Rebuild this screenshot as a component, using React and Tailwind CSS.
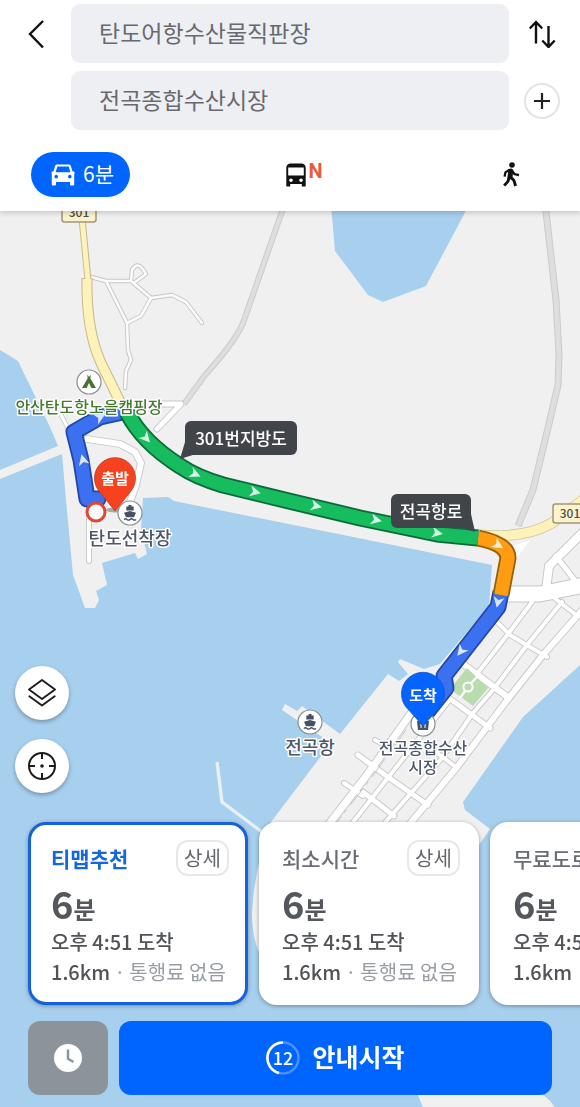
import React from "react";

const LAND = "#f0f0f0";
const WATER = "#a7cfee";

const localRoads = [
  "M91 277 L106 281 L131 281 L151 298 L172 295 L186 302 L202 323",
  "M131 281 L132 270 Q137 262 142 268 L146 274 L134 283",
  "M106 281 L127 323 L128 350 L131 360 L126 371 L125 388",
  "M127 323 L141 316 L151 298",
];

const streets = [
  { d: "M87 439 L120 444 L135 452 L141 463 L136 485 L130 502", w: 6 },
  { d: "M89 518 L89 561", w: 4 },
  { d: "M160 404 L181 404 L157 429", w: 5 },
  { d: "M60 413 L70 432", w: 3 },
  { d: "M506 594 L540 594 L584 585", w: 15 },
  { d: "M546 590 L549 566 L584 531", w: 8 },
  { d: "M556 556 L576 582", w: 5 },
  { d: "M532 602 L508 634 L466 688", w: 4 },
  { d: "M562 602 L527 645 L493 690 L473 713 L442 758 L382 826", w: 4 },
  { d: "M584 608 L543 655 L508 699 L457 767 L408 826", w: 6 },
  { d: "M412 712 L367 775 L326 828", w: 7 },
  { d: "M448 702 L398 765 L350 826", w: 4 },
  { d: "M494 619 L510 635 L547 657", w: 4 },
  { d: "M553 597 L575 614", w: 4 },
  { d: "M463 664 L509 698", w: 6 },
  { d: "M446 696 L490 728", w: 5 },
  { d: "M375 740 L390 748", w: 4 },
  { d: "M428 746 L457 768", w: 4 },
  { d: "M358 755 L385 775 L428 805", w: 5 },
  { d: "M344 783 L363 796", w: 4 },
  { d: "M363 792 L394 816", w: 5 },
];

const route = [
  { d: "M501 592 L498 607 L444 676 L446 688 L427 712", line: "#3b70f0", edge: "#2148a4", cap: "butt" },
  { d: "M98 499 L87 499 L81 460 L74 432 L100 417 L127 411", line: "#3b70f0", edge: "#2148a4", cap: "round" },
  { d: "M478 538 Q508 544 508 558 L501 595", line: "#ff9c12", edge: "#96600f", cap: "butt" },
  {
    d: "M127 412 Q142 442 180 466 Q196 477 223 485 L293 502 L360 518 L437 534 L478 538",
    line: "#17bc5f",
    edge: "#0d6a3a",
    cap: "butt",
  },
];

const arrows = [
  [100, 417, -28],
  [83, 460, -105],
  [146, 438, 48],
  [195, 474, 24],
  [255, 492, 13],
  [316, 506, 13],
  [376, 520, 13],
  [437, 533, 10],
  [498, 545, 32],
  [498, 602, 102],
  [461, 651, 128],
];

function Road({ d, w, fill, edge }) {
  return (
    <>
      <path d={d} stroke={edge} strokeWidth={w + 2} />
      <path d={d} stroke={fill} strokeWidth={w} />
    </>
  );
}

function PoiLabel({ x, y, size = 17, color = "#4d5768", children }) {
  return (
    <text
      x={x}
      y={y}
      textAnchor="middle"
      fontSize={size}
      fontWeight="500"
      fill={color}
      stroke="#fff"
      strokeWidth="3"
      strokeLinejoin="round"
      paintOrder="stroke"
    >
      {children}
    </text>
  );
}

function PoiDot({ x, y, children }) {
  return (
    <g transform={`translate(${x} ${y})`}>
      <circle r="12" fill="#fff" stroke="#8b8f94" strokeWidth="1.2" />
      {children}
    </g>
  );
}

function Ship() {
  return (
    <g fill="#465163">
      <path d="M-1.5 -8h3v1.6h2.2v4h-7.4v-4h2.2z" />
      <path d="M-6 -0.2 L0 -2 L6 -0.2 L4 4.2 H-4z" />
      <path d="M-6 6.4 q1.5 -1.4 3 0 t3 0 t3 0 t3 0" fill="none" stroke="#465163" strokeWidth="1.3" />
    </g>
  );
}

function Callout({ x, y, w, tail, label }) {
  return (
    <g>
      <path d={tail} fill="#41454a" />
      <rect x={x} y={y} width={w} height="34" rx="6" fill="#41454a" />
      <text x={x + w / 2} y={y + 24} textAnchor="middle" fontSize="17" fontWeight="500" fill="#fff">
        {label}
      </text>
    </g>
  );
}

function Shield({ x, y }) {
  return (
    <g>
      <rect x={x} y={y} width="34" height="19" rx="2.5" fill="#fdf2cb" stroke="#a2957a" strokeWidth="1.5" />
      <text x={x + 17} y={y + 14} textAnchor="middle" fontSize="12" fontWeight="500" fill="#4b4b4b">
        301
      </text>
    </g>
  );
}

function RouteMap() {
  return (
    <svg
      className="absolute inset-0 h-full w-full"
      viewBox="0 211 580 896"
      preserveAspectRatio="xMidYMin slice"
      role="img"
      aria-label="경로 지도"
    >
      <rect x="0" y="200" width="580" height="920" fill={WATER} />
      <g fill={LAND}>
        <path d="M0 200 H580 V665 L523 717 L463 802 L465 810 L490 829 L479 845 L440 920 L400 990 H290 L258 950 Q252 935 252 912 Q254 880 262 850 L271 822 L331 743 L282 710 L285 704 L297 711 L302 706 L340 734 L388 674 L399 681 L408 674 L398 662 L400 659 L424 669 L440 664 L489 606 L492 565 L174 501 L168 497 L143 498 L141 530 L147 554 L138 559 L135 553 L102 563 L107 585 L96 591 L99 600 L95 608 H85 L73 575 L66 500 L62 454 L0 479 V470 L58 446 L50 427 L18 361 L0 350z" />
        <path d="M415 1088 H530 Q550 1096 556 1110 H424z" />
      </g>
      <path d="M331 205 L335 251 L368 295 L383 302 L426 286 L469 205z" fill={WATER} />
      <path d="M217 762 L222 802 L262 832" fill="none" stroke="#e9eff4" strokeWidth="3.4" />

      <g fill="none" strokeLinejoin="round">
        <Road d="M285 203 L243 323 Q235 342 205 375 L184 404" w={4} fill="#dedede" edge="#cbcbcb" />
        <Road d="M545 203 L556 300 L559 355 L558 385 L548 428 L533 490 L518 526" w={5} fill="#dedede" edge="#cbcbcb" />
        <g strokeLinecap="round">
          {localRoads.map((d) => (
            <path key={d} d={d} stroke="#c6c6c6" strokeWidth="4.4" />
          ))}
          {localRoads.map((d) => (
            <path key={d} d={d} stroke="#fbfbfb" strokeWidth="2.6" />
          ))}
          {streets.map((s) => (
            <path key={s.d} d={s.d} stroke="#c6c6c6" strokeWidth={s.w + 1.8} />
          ))}
          {streets.map((s) => (
            <path key={s.d} d={s.d} stroke="#fff" strokeWidth={s.w} />
          ))}
        </g>
        <path d="M406 730 L372 777 L328 834" stroke="#c6c6c6" strokeWidth="1" strokeDasharray="22 6 4 4" />
        <path d="M507 548 L530 540 L515 560z" fill="#fff" />
        <path d="M82 218 L88 280" stroke="#c6b98c" strokeWidth="7" />
        <path d="M87 278 Q86 330 101 363 L126 414" stroke="#c6b98c" strokeWidth="11" />
        <path d="M478 535 Q525 539 552 523 L584 499" stroke="#d3c79c" strokeWidth="11" />
        <path d="M82 218 L88 281" stroke="#fdf2b9" strokeWidth="5" />
        <path d="M87 279 Q86 330 101 363 L126 414" stroke="#fdf2b9" strokeWidth="9" />
        <path d="M478 535 Q525 539 552 523 L584 499" stroke="#fdf2b9" strokeWidth="9.4" />
      </g>

      <path d="M467 668 L488 688 L473 706 L450 689z" fill="#b8dcae" />
      <g fill="none" stroke="#fff">
        <path d="M478 676 L471 683 M465 691 L460 698" strokeWidth="2.4" />
        <circle cx="468" cy="687" r="4.6" strokeWidth="2" fill="#b8dcae" />
      </g>

      <Shield x={62} y={203} />
      <Shield x={553} y={504} />

      <g fill="none" strokeLinejoin="round">
        {route.map((r) => (
          <g key={r.d} strokeLinecap={r.cap}>
            <path d={r.d} stroke={r.edge} strokeWidth="17" />
            <path d={r.d} stroke={r.line} strokeWidth="13.4" />
          </g>
        ))}
      </g>
      <g fill="#fff" opacity="0.82">
        {arrows.map(([x, y, a]) => (
          <path key={`${x}-${y}`} d="M6 0 L-5 -5.5 L-2 0 L-5 5.5z" transform={`translate(${x} ${y}) rotate(${a})`} />
        ))}
      </g>

      <PoiDot x={89} y={382}>
        <path d="M-1.6 -7.4 L0 -5 L1.6 -7.4 L1.4 -3.6 L7 6 H2.4 L0 1 L-2.4 6 H-7 L-1.4 -3.6z" fill="#457330" />
      </PoiDot>
      <PoiLabel x={89} y={413} size={16} color="#457a2f">
        안산탄도항노을캠핑장
      </PoiLabel>

      <ellipse cx="115" cy="510" rx="9" ry="2.5" fill="#000" opacity="0.3" />
      <PoiDot x={130} y={513}>
        <Ship />
      </PoiDot>
      <PoiLabel x={130} y={545} size={18}>
        탄도선착장
      </PoiLabel>
      <PoiDot x={310} y={722}>
        <Ship />
      </PoiDot>
      <PoiLabel x={310} y={754} size={18}>
        전곡항
      </PoiLabel>
      <PoiDot x={423} y={724}>
        <path d="M-6 -3 H6 L5 6 H-5z" fill="#465163" />
        <path d="M-2 0v4 M2 0v4" stroke="#fff" />
      </PoiDot>
      <PoiLabel x={423} y={754} size={16}>
        <tspan x="423">전곡종합수산</tspan>
        <tspan x="423" dy="19">
          시장
        </tspan>
      </PoiLabel>

      <circle cx="96" cy="512" r="9" fill="#fff" stroke="#e0492f" strokeWidth="3" />
      <path d="M115 511 L99 491 A20.5 20.5 0 1 1 131 491z" fill="#f7421f" stroke="#b83a22" strokeWidth="0.8" />
      <text x="115" y="484" textAnchor="middle" fontSize="15" fontWeight="700" fill="#fff">
        출발
      </text>
      <path d="M423 726 L406 707 A21.5 21.5 0 1 1 440 707z" fill="#0564ff" stroke="#1b55c0" strokeWidth="0.8" />
      <text x="423" y="701" textAnchor="middle" fontSize="15" fontWeight="700" fill="#fff">
        도착
      </text>

      <Callout x={185} y={421} w={112} tail="M185 442 L180 459 L196 454z" label="301번지방도" />
      <Callout x={391} y={494} w={80} tail="M471 514 L475 532 L460 527z" label="전곡항로" />
    </svg>
  );
}

function CarIcon() {
  return (
    <svg className="h-[22px] w-6" viewBox="0 0 24 22" fill="currentColor" aria-hidden="true">
      <path
        fillRule="evenodd"
        d="M6 0.5 H18 Q19.3 0.5 19.8 1.8 L21.6 7.6 H23 Q23.8 7.8 23.5 9 L23.2 10.5 V20.5 Q23.2 21.5 22.2 21.5 H20 Q19 21.5 19 20.5 V18 H5 V20.5 Q5 21.5 4 21.5 H1.8 Q0.8 21.5 0.8 20.5 V10.5 L0.5 9 Q0.2 7.8 1 7.6 H2.4 L4.2 1.8 Q4.7 0.5 6 0.5z M6.4 2.6 L4.6 8.2 H19.4 L17.6 2.6z M5.2 10.8 a1.8 1.8 0 1 0 0.01 0z M18.8 10.8 a1.8 1.8 0 1 0 0.01 0z"
      />
    </svg>
  );
}

function BusIcon() {
  return (
    <svg className="h-6 w-5" viewBox="0 0 20 24" fill="currentColor" aria-hidden="true">
      <path
        fillRule="evenodd"
        d="M4 0.5 H16 Q19.7 1.2 19.7 5 V23 Q19.7 23.6 19 23.6 H16.4 Q15.8 23.6 15.8 23 V21 H4.2 V23 Q4.2 23.6 3.6 23.6 H1 Q0.3 23.6 0.3 23 V5 Q0.3 1.2 4 0.5z M2.2 4.4 V12.6 H17.8 V4.4z M5 15.4 a1.8 1.8 0 1 0 0.01 0z M15 15.4 a1.8 1.8 0 1 0 0.01 0z"
      />
    </svg>
  );
}

function WalkIcon() {
  return (
    <svg className="h-[25px] w-[18px]" viewBox="0 0 18 25" fill="none" stroke="currentColor" strokeLinejoin="round" aria-hidden="true">
      <circle cx="10" cy="3" r="2.8" fill="currentColor" stroke="none" />
      <path d="M8.8 9 L8 15" strokeWidth="5" strokeLinecap="round" />
      <path d="M7.5 7.8 L3.4 10.4 L2.6 14.6" strokeWidth="2.3" />
      <path d="M10 8.8 L12.6 12.2 L17 13.2" strokeWidth="2.3" />
      <path d="M8.6 15 L12 18.6 L13.6 24" strokeWidth="2.9" />
      <path d="M6.9 15.5 L6 19.4 L2.2 23.6" strokeWidth="2.9" />
    </svg>
  );
}

function PlaceField({ id, label, value }) {
  return (
    <div className="flex">
      <label htmlFor={id} className="sr-only">
        {label}
      </label>
      <input
        id={id}
        type="text"
        defaultValue={value}
        className="h-[59px] w-full min-w-0 rounded-[9px] bg-[#eeeff3] px-7 pb-[3px] text-[23px] font-normal text-[#66696f] outline-none"
      />
    </div>
  );
}

function RouteCard({ name, active }) {
  return (
    <li
      className={
        active
          ? "w-[220px] shrink-0 rounded-[18px] border-3 border-[#1661dc] bg-white px-5 pt-[15px] pb-4 shadow-[0_1px_4px_rgba(0,0,0,0.3)]"
          : "w-[220px] shrink-0 rounded-[18px] border-3 border-white bg-white px-5 pt-[15px] pb-4 shadow-[0_1px_4px_rgba(0,0,0,0.35)]"
      }
    >
      <div className="-mr-1 flex h-9 items-center justify-between">
        <h2
          className={
            active
              ? "text-[21px] leading-9 font-bold whitespace-nowrap text-[#1468dc]"
              : "text-[21px] leading-9 font-medium whitespace-nowrap text-[#6a6e74]"
          }
        >
          {name}
        </h2>
        <button
          type="button"
          className="h-9 w-[53px] shrink-0 rounded-xl border-2 border-[#e7e8eb] text-xl leading-7 font-normal text-[#63666b]"
        >
          상세
        </button>
      </div>
      <p className="flex h-[50px] items-baseline font-bold text-[#54575c]">
        <span className="text-[38px] leading-[54px]">6</span>
        <span className="text-2xl">분</span>
      </p>
      <p className="text-xl leading-8 font-medium whitespace-nowrap text-[#505358]">오후 4:51 도착</p>
      <p className="flex gap-1 text-xl leading-7 font-normal whitespace-nowrap text-[#989da4]">
        <span className="font-medium text-[#505358]">1.6km</span>
        <span>·</span>
        <span>통행료 없음</span>
      </p>
    </li>
  );
}

export default function App() {
  return (
    <div className="flex min-h-screen flex-col overflow-hidden bg-white font-['Noto_Sans_CJK_KR','Noto_Sans',sans-serif]">
      <header className="relative z-10 bg-white pt-1 shadow-[0_2px_5px_rgba(0,0,0,0.18)]">
        <div className="grid grid-cols-[71px_1fr_65px] items-center gap-y-2 pr-[6px]">
          <button type="button" aria-label="뒤로" className="flex justify-center text-[#111]">
            <svg className="h-8 w-5" viewBox="0 0 20 32" fill="none" stroke="currentColor" strokeWidth="2.4">
              <path d="M17 3 L4 16 L17 29.5" />
            </svg>
          </button>
          <PlaceField id="origin" label="출발지" value="탄도어항수산물직판장" />
          <button type="button" aria-label="출발지와 도착지 바꾸기" className="flex justify-center text-[#111]">
            <svg className="h-7 w-7" viewBox="0 0 28 28" fill="none" stroke="currentColor" strokeWidth="2.4">
              <path d="M8 23.5 V2.5 M1.8 8.5 L8 2 L14.2 8.5 M20.5 6 V27 M14.3 20.5 L20.5 27 L26.7 20.5" />
            </svg>
          </button>
          <div className="col-start-2">
            <PlaceField id="destination" label="도착지" value="전곡종합수산시장" />
          </div>
          <button
            type="button"
            aria-label="경유지 추가"
            className="mx-auto flex h-9 w-9 items-center justify-center rounded-full border-2 border-[#e4e4e6] text-[#222]"
          >
            <svg className="h-4 w-4" viewBox="0 0 16 16" fill="none" stroke="currentColor" strokeWidth="2.2">
              <path d="M8 0 V16 M0 8 H16" />
            </svg>
          </button>
        </div>
        <nav className="flex justify-between pt-[22px] pr-5 pb-[14px] pl-[31px]">
          <button
            type="button"
            aria-pressed="true"
            className="flex h-[45px] w-[99px] items-center justify-center gap-2 rounded-full bg-[#0064ff] pl-1 text-[21px] leading-8 font-normal text-white"
          >
            <CarIcon />
            <span className="pb-[3px]">6분</span>
          </button>
          <button type="button" aria-label="대중교통" className="flex h-[45px] w-[99px] items-center justify-center text-[#111]">
            <span className="relative">
              <BusIcon />
              <span className="absolute top-0 left-full pl-[3px] font-['Roboto'] text-xl leading-4 font-bold text-[#e95b3c]">N</span>
            </span>
          </button>
          <button type="button" aria-label="도보" className="flex h-[45px] w-[99px] items-center justify-center text-[#111]">
            <WalkIcon />
          </button>
        </nav>
      </header>

      <main className="relative flex flex-1 flex-col justify-end bg-[#a7cfee]">
        <RouteMap />
        <div className="relative flex flex-col gap-[19px] pt-40 pb-[21px] pl-[15px]">
          <button
            type="button"
            aria-label="지도 레이어"
            className="flex h-[54px] w-[54px] items-center justify-center rounded-full bg-white text-[#1c1c1c] shadow-[0_2px_4px_rgba(0,0,0,0.3)]"
          >
            <svg
              className="h-7 w-7"
              viewBox="0 0 28 28"
              fill="none"
              stroke="currentColor"
              strokeWidth="1.9"
              strokeLinejoin="round"
              strokeLinecap="round"
            >
              <path d="M14 1 L27 10.5 L14 20 L1 10.5z M1.3 17.2 L14 26.5 L26.7 17.2" />
            </svg>
          </button>
          <button
            type="button"
            aria-label="현재 위치"
            className="flex h-[54px] w-[54px] items-center justify-center rounded-full bg-white text-[#1c1c1c] shadow-[0_2px_4px_rgba(0,0,0,0.3)]"
          >
            <svg className="h-7 w-7" viewBox="0 0 28 28" fill="none" stroke="currentColor" strokeWidth="2">
              <circle cx="14" cy="14" r="13" />
              <path d="M14 1 V7 M14 21 V27 M1 14 H7 M21 14 H27" />
              <circle cx="14" cy="14" r="1.8" fill="currentColor" stroke="none" />
            </svg>
          </button>
        </div>
        <ul className="relative flex gap-[11px] overflow-x-auto py-2 pl-7 [scrollbar-width:none]">
          <RouteCard name="티맵추천" active />
          <RouteCard name="최소시간" />
          <RouteCard name="무료도로" />
        </ul>
        <div className="relative flex gap-[11px] px-7 pt-2 pb-3">
          <button type="button" aria-label="출발 시간 설정" className="flex h-[74px] w-20 items-center justify-center rounded-xl bg-[#8b939b]">
            <svg className="h-7 w-7" viewBox="0 0 28 28" fill="none">
              <circle cx="14" cy="14" r="14" fill="#fff" />
              <path d="M14 5.5 V14.8 L19.5 18" stroke="#8b939b" strokeWidth="2.4" />
            </svg>
          </button>
          <button
            type="button"
            className="flex h-[74px] flex-1 items-center justify-center gap-3 rounded-xl bg-[#0064ff] text-[25px] leading-9 font-bold text-white"
          >
            <svg className="h-[34px] w-[34px]" viewBox="0 0 34 34" fill="none">
              <circle cx="17" cy="17" r="15.5" stroke="#4a93ff" strokeWidth="2.4" />
              <path d="M17 1.5 A15.5 15.5 0 0 0 13 32" stroke="#fff" strokeWidth="2.6" />
              <text x="17" y="23.5" textAnchor="middle" fontSize="18" fontWeight="500" fill="#fff">
                12
              </text>
            </svg>
            <span className="pb-1">안내시작</span>
          </button>
        </div>
      </main>
    </div>
  );
}
